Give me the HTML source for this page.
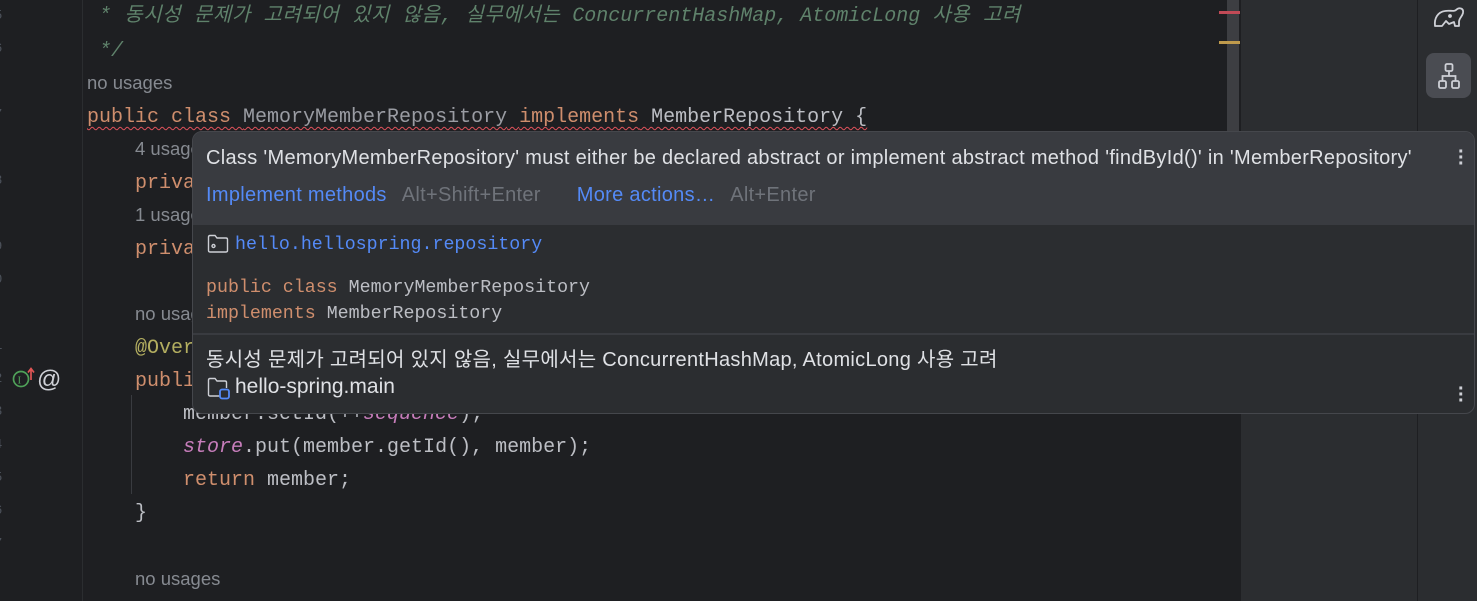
<!DOCTYPE html>
<html><head><meta charset="utf-8"><style>
*{margin:0;padding:0;box-sizing:border-box}
body{width:1477px;height:601px;overflow:hidden;background:#1e1f22;position:relative;font-family:"Liberation Sans","Noto Sans CJK KR",sans-serif}
.mono{font-family:"Liberation Mono","Noto Sans CJK KR",monospace}
.ln{position:absolute;left:-6px;color:#4b5059;font-size:14px;font-family:"Liberation Mono",monospace}
.code{position:absolute;left:87px;font-size:20px;white-space:pre;color:#bcbec4;line-height:33px;font-family:"Liberation Mono","Noto Sans CJK KR",monospace}
.hint{position:absolute;font-size:18.5px;color:#868a91;line-height:33px}
.k{color:#cf8e6d}.c{color:#5f826b;font-style:italic}.a{color:#b3ae60}.p{color:#c77dbb;font-style:italic}
.ko{letter-spacing:0.6px}
.ui{font-size:20px;letter-spacing:0.3px;white-space:nowrap}
</style></head><body>
<div style="position:absolute;left:82px;top:0;width:1px;height:601px;background:#2b2d30"></div>
<div style="position:absolute;left:1227px;top:0;width:12px;height:135px;background:#3d3e42"></div>
<div style="position:absolute;left:1219px;top:11px;width:21px;height:3px;background:#c14a56"></div>
<div style="position:absolute;left:1219px;top:41px;width:21px;height:3px;background:#bf9a4c"></div>
<div style="position:absolute;left:1241px;top:0;width:176px;height:601px;background:#2b2d30"></div>
<div style="position:absolute;left:1417px;top:0;width:1px;height:601px;background:#1e1f22"></div>
<div style="position:absolute;left:1418px;top:0;width:59px;height:601px;background:#2b2d30"></div>
<svg style="position:absolute;left:1432px;top:4px" width="34" height="26" viewBox="0 0 34 26" fill="none" stroke="#ced0d6" stroke-width="1.8" stroke-linejoin="round"><path d="M3 22 C2 14 6 8 13 7 C18 6 22 8 24 6 C27 3 32 4 31 9 C30 13 27 14 27 18 L27 22 L23 22 L22 18 L17 20 L14 17 L10 22 Z"/><circle cx="18" cy="12" r="1" fill="#ced0d6"/></svg>
<div style="position:absolute;left:1426px;top:53px;width:45px;height:45px;background:#4a4c52;border-radius:8px"></div>
<svg style="position:absolute;left:1436px;top:62px" width="26" height="28" viewBox="0 0 26 28" fill="none" stroke="#ced0d6" stroke-width="1.8"><rect x="9.5" y="2" width="7" height="7" rx="1.5"/><rect x="3" y="19" width="7" height="7" rx="1.5"/><rect x="16" y="19" width="7" height="7" rx="1.5"/><path d="M13 9 V14 M6.5 19 V14 H19.5 V19"/></svg>

<div class="ln" style="top:8px">5</div><div class="ln" style="top:41px">6</div><div class="ln" style="top:107px">7</div><div class="ln" style="top:173px">8</div><div class="ln" style="top:239px">9</div><div class="ln" style="top:272px">0</div><div class="ln" style="top:338px">1</div><div class="ln" style="top:371px">2</div><div class="ln" style="top:404px">3</div><div class="ln" style="top:437px">4</div><div class="ln" style="top:470px">5</div><div class="ln" style="top:503px">6</div><div class="ln" style="top:536px">7</div>
<svg style="position:absolute;left:10px;top:366px" width="54" height="26" viewBox="0 0 54 26"><circle cx="11" cy="13" r="7.5" fill="none" stroke="#4fa159" stroke-width="1.7"/><text x="7.5" y="17.5" font-size="11" fill="#4fa159" font-family="Liberation Serif">I</text><path d="M21 14 V3 M18 6.5 L21 2.5 L24 6.5" stroke="#e05555" stroke-width="1.7" fill="none"/><text x="27" y="21" font-size="24" fill="#ced0d6" font-family="Liberation Sans">@</text></svg>
<div style="position:absolute;left:131px;top:395px;width:1px;height:99px;background:#393b40"></div>

<div class="code" style="top:0"> <span class="c"><span class="ko">* 동시성 문제가 고려되어 있지 않음,</span> <span class="ko">실무에서는</span> ConcurrentHashMap, AtomicLong <span class="ko">사용 고려</span></span></div>
<div class="code" style="top:35px"> <span class="c">*/</span></div>
<div class="hint" style="left:87px;top:66px">no usages</div>
<div class="code" style="top:101px;text-decoration:underline wavy #e0525b;text-underline-offset:4px;text-decoration-thickness:1px"><span class="k">public class </span><span style="color:#9a9ca3">MemoryMemberRepository</span> <span class="k">implements</span> MemberRepository {</div>
<div class="hint" style="left:135px;top:132px">4 usages</div>
<div class="code" style="top:167px">    <span class="k">private</span></div>
<div class="hint" style="left:135px;top:198px">1 usage</div>
<div class="code" style="top:233px">    <span class="k">private</span></div>
<div class="hint" style="left:135px;top:297px">no usages</div>
<div class="code" style="top:332px">    <span class="a">@Override</span></div>
<div class="code" style="top:365px">    <span class="k">public</span></div>
<div class="code" style="top:398px">        member.setId(++<span class="p">sequence</span>);</div>
<div class="code" style="top:431px">        <span class="p">store</span>.put(member.getId(), member);</div>
<div class="code" style="top:464px">        <span class="k">return</span> member;</div>
<div class="code" style="top:497px">    }</div>
<div class="hint" style="left:135px;top:562px">no usages</div>

<div style="position:absolute;left:192px;top:131px;width:1283px;height:283px;background:#2b2d30;border:1px solid #45474c;border-radius:10px;overflow:hidden">
 <div style="position:absolute;left:0;top:0;right:0;height:93px;background:#393b40"></div>
 <div class="ui" style="position:absolute;left:13px;top:15px;color:#dfe1e5">Class 'MemoryMemberRepository' must either be declared abstract or implement abstract method 'findById()' in 'MemberRepository'</div>
 <div class="ui" style="position:absolute;left:13px;top:52px"><span style="color:#548af7">Implement methods</span><span style="color:#6f737a;margin-left:15px">Alt+Shift+Enter</span><span style="color:#548af7;margin-left:36px">More actions…</span><span style="color:#6f737a;margin-left:15px">Alt+Enter</span></div>
 <div style="position:absolute;right:12px;top:17px;width:4px;color:#ced0d6;font-size:20px;line-height:6px;font-weight:bold">·<br>·<br>·</div>
 <svg style="position:absolute;left:14px;top:102px" width="22" height="20" viewBox="0 0 22 20" fill="none" stroke="#ced0d6" stroke-width="1.4"><path d="M1.5 3 Q1.5 1.5 3 1.5 H8 L10 4 H19 Q20.5 4 20.5 5.5 V16.5 Q20.5 18 19 18 H3 Q1.5 18 1.5 16.5 Z"/><circle cx="6.5" cy="12" r="1.5"/></svg>
 <div class="mono" style="position:absolute;left:42px;top:103px;font-size:18.3px;color:#548af7;white-space:pre">hello.hellospring.repository</div>
 <div class="mono" style="position:absolute;left:13px;top:143px;font-size:18.3px;color:#bcbec4;white-space:pre;line-height:26px"><span class="k">public class </span>MemoryMemberRepository
<span class="k">implements </span>MemberRepository</div>
 <div style="position:absolute;left:0;right:0;top:201px;height:2px;background:#393b40"></div>
 <div class="ui" style="position:absolute;left:13px;top:211px;color:#dfe1e5">동시성 문제가 고려되어 있지 않음, 실무에서는 ConcurrentHashMap, AtomicLong 사용 고려</div>
 <svg style="position:absolute;left:14px;top:245px" width="24" height="24" viewBox="0 0 24 24" fill="none" stroke="#ced0d6" stroke-width="1.4"><path d="M14 19 H3 Q1.5 19 1.5 17.5 V3 Q1.5 1.5 3 1.5 H8 L10 4 H18 Q19.5 4 19.5 5.5 V11"/><rect x="13" y="12.5" width="9" height="9" rx="2" stroke="#548af7" stroke-width="1.8" fill="#2b2d30"/></svg>
 <div style="position:absolute;left:42px;top:243px;font-size:21px;color:#dfe1e5">hello-spring.main</div>
 <div style="position:absolute;right:12px;top:254px;width:4px;color:#ced0d6;font-size:20px;line-height:6px;font-weight:bold">·<br>·<br>·</div>
</div>
</body></html>
